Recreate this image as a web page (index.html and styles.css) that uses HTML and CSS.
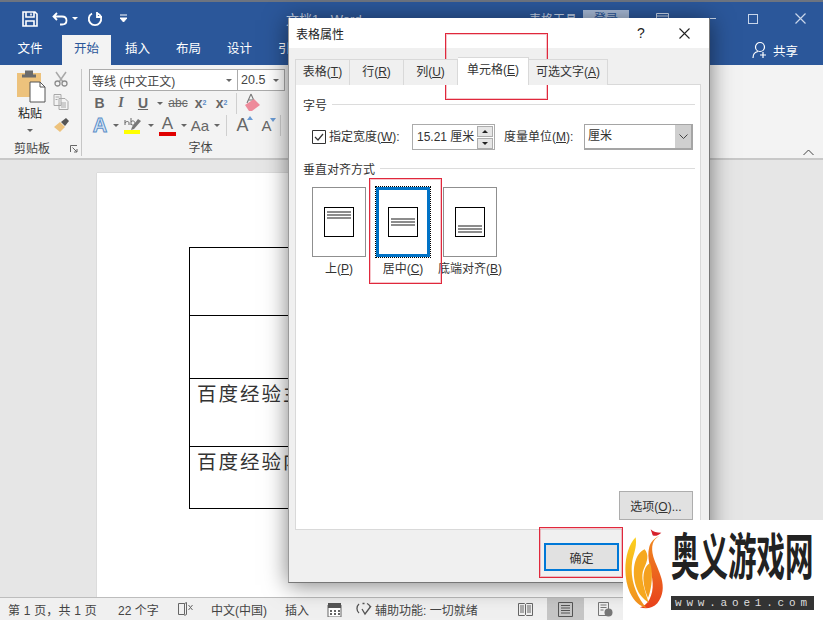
FILE: index.html
```html
<!DOCTYPE html>
<html lang="zh-CN">
<head>
    <meta charset="UTF-8">
    <title>表格属性</title>
    <link rel="stylesheet" href="styles.css">
</head>
<body>
    <div class="app">
        <div class="titlebar">
            <svg class="qat-save" width="16" height="16" viewBox="0 0 16 16"><path d="M1 1h12l2 2v12H1z M4 1v5h8V1 M4 15V10h8v5 M9 2.500v2" fill="none" stroke="#fff" stroke-width="1.600"/></svg>
            <svg class="qat-undo" width="18" height="14" viewBox="0 0 18 14"><path d="M5 1L1.500 4.500 5 8 M2 4.500h8c6 0 6 8 0 8H8" fill="none" stroke="#fff" stroke-width="1.800"/></svg>
            <span class="qat-caret"></span>
            <svg class="qat-redo" width="16" height="16" viewBox="0 0 16 16"><path d="M11 2.500A6.200 6.200 0 1 1 5 2.500 M10 1v5h5" fill="none" stroke="#fff" stroke-width="1.800"/></svg>
            <svg class="qat-more" width="7" height="9" viewBox="0 0 7 9"><path d="M0 1h7M0 4h7l-3.500 4z" stroke="#fff" fill="#fff"/></svg>
            <span class="doc-title">文档1 - Word</span>
            <span class="tool-title">表格工具</span>
            <span class="login">登录</span>
            <svg class="win-ribbon" width="13" height="12" viewBox="0 0 13 12"><path d="M.5.500h12v11H.500z M.5 3h12 M6.500 9V5M4.500 7l2-2 2 2" fill="none" stroke="#c9d6ea"/></svg>
            <span class="win-min"></span>
            <span class="win-max"></span>
            <svg class="win-close" width="11" height="11" viewBox="0 0 11 11"><path d="M.5.500l10 10M10.500.500l-10 10" stroke="#c9d6ea" stroke-width="1.200"/></svg>
        </div>

        <div class="tabs">
            <span class="tab first">文件</span>
            <span class="tab active">开始</span>
            <span class="tab">插入</span>
            <span class="tab">布局</span>
            <span class="tab">设计</span>
            <span class="tab">引用</span>
            <span class="share">
                <svg width="16" height="18" viewBox="0 0 16 18"><circle cx="8" cy="6" r="4.500" fill="none" stroke="#fff" stroke-width="1.200"/><path d="M1 17c0-4 2-6 5-6.500 M11 11v6M8 14h6" fill="none" stroke="#fff" stroke-width="1.200"/></svg>
                共享
            </span>
        </div>

        <div class="ribbon">
            <div class="group paste-group">
                <div class="group-body paste-body">
                    <div class="paste-col">
                        <svg width="30" height="34" viewBox="0 0 30 34"><path d="M1 4h24v24H1z" fill="#edc27c"/><path d="M9 1.500h8v4h3v3H6v-3h3z" fill="#6b6b6b"/><path d="M14 13h10l5 5v15H14z" fill="#fff" stroke="#555"/><path d="M24 13v5h5" fill="none" stroke="#555"/></svg>
                        <span class="paste-label">粘贴</span>
                        <span class="caret"></span>
                    </div>
                    <div class="clip-col">
                        <svg width="16" height="16" viewBox="0 0 16 16"><path d="M3 1l7 10M13 1L6 11" stroke="#a9a9a9" stroke-width="1.500"/><circle cx="4.500" cy="12.500" r="2.500" fill="none" stroke="#8d8d8d" stroke-width="1.300"/><circle cx="11.500" cy="12.500" r="2.500" fill="none" stroke="#8d8d8d" stroke-width="1.300"/></svg>
                        <svg width="16" height="16" viewBox="0 0 16 16"><path d="M1 .500h7v11H1z M6 4.500h6l3 3v8H6z M2.500 3h4M2.500 5.500h2M8 9h5M8 11h5M8 13h5" fill="#f3f3f3" stroke="#a8a8a8"/></svg>
                        <svg width="17" height="16" viewBox="0 0 17 16"><path d="M1 10l6-5 5 5-5 5z" fill="#edc27c"/><path d="M8 5l5-4 3 3-4 5z" fill="#555"/></svg>
                    </div>
                </div>
                <div class="group-label clip-label">
                    <span>剪贴板</span>
                    <svg class="launcher" width="8" height="8" viewBox="0 0 8 8"><path d="M.5 7V.500H7 M2.500 2.500L7 7M7 4v3H4" fill="none" stroke="#666"/></svg>
                </div>
            </div>

            <div class="group font-group">
                <div class="combo-row">
                    <div class="rb-combo font-name"><span>等线 (中文正文)</span><span class="caret"></span></div>
                    <div class="rb-combo font-size"><span>20.5</span><span class="caret"></span></div>
                </div>
                <div class="tool-row">
                    <span class="rb w21 bold">B</span>
                    <span class="rb w22 ital">I</span>
                    <span class="rb w22 under">U</span>
                    <span class="rb w12"><span class="caret"></span></span>
                    <span class="rb w24 strike">abc</span>
                    <span class="rb w21 bold">x<sub class="sub-mark">2</sub></span>
                    <span class="rb w21 bold">x<sup class="sup-mark">2</sup></span>
                    <span class="rb-sep first-sep"></span>
                    <span class="rb w30">
                        <svg width="20" height="20" viewBox="0 0 20 20"><path d="M9 1L5 10M9 1l4 9M6 7h6" fill="none" stroke="#777" stroke-width="1.100"/><path d="M3 12l9-6 6 6-8 6H7z" fill="#ee8b9b"/></svg>
                    </span>
                </div>
                <div class="tool-row third">
                    <span class="rb w22 text-effect">A</span>
                    <span class="rb w9"><span class="caret"></span></span>
                    <span class="rb w26">
                        <svg width="18" height="18" viewBox="0 0 18 18"><path d="M1 3v5M1 6c1-2 4-2 4 0v2M7 1v7M7 5c1-2 4-1 4 1s-3 3-4 1" fill="none" stroke="#666"/><path d="M14 2l3 2-7 8-3 1 1-3z" fill="#777"/><path d="M0 13h16v4H0z" fill="#ffff00"/></svg>
                    </span>
                    <span class="rb w9"><span class="caret"></span></span>
                    <span class="rb w25 font-color">A</span>
                    <span class="rb w8"><span class="caret"></span></span>
                    <span class="rb w24 case">Aa</span>
                    <span class="rb w10"><span class="caret"></span></span>
                    <span class="rb-sep second-sep"></span>
                    <span class="rb w25 grow">A<i class="tri-up"></i></span>
                    <span class="rb w23 shrink">A<i class="tri-down"></i></span>
                    <span class="rb-sep third-sep"></span>
                </div>
                <div class="group-label font-label">字体</div>
            </div>

            <svg class="collapse" width="11" height="7" viewBox="0 0 11 7"><path d="M.5 6L5.500 1l5 5" fill="none" stroke="#444"/></svg>
        </div>

        <div class="workspace">
            <div class="page">
                <table class="doc-table">
                    <tr class="row-a"><td></td></tr>
                    <tr class="row-b"><td></td></tr>
                    <tr class="row-c"><td>百度经验主题</td></tr>
                    <tr class="row-d"><td>百度经验内容</td></tr>
                </table>
            </div>
        </div>

        <div class="statusbar">
            <span class="st page-count">第 1 页，共 1 页</span>
            <span class="st word-count">22 个字</span>
            <svg class="st-proof" width="15" height="15" viewBox="0 0 15 15"><path d="M.5 1.500h6v11h-6z M6.500 1.500l2-1v12l-2 1 M10.500 3l4 5M14.500 3l-4 5" fill="none" stroke="#666"/></svg>
            <span class="st lang">中文(中国)</span>
            <span class="st insert">插入</span>
            <svg class="st-macro" width="15" height="15" viewBox="0 0 15 15"><path d="M1 3h13v12H1z" fill="#fff" stroke="#666"/><path d="M1 1h13v5H1z" fill="#555"/><path d="M3 8h2v2H3zM7 8h2v2H7zM11 8h2v2h-2zM3 11h2v2H3zM7 11h2v2H7zM11 11h2v2h-2z" fill="#666"/></svg>
            <svg class="st-access" width="17" height="16" viewBox="0 0 17 16"><path d="M3 12A6 6 0 0 1 3 3 M11 2.500a6 6 0 0 1 3 3 M6.500 2.500h2 M6 8l3 5 6-8" fill="none" stroke="#555" stroke-width="1.300"/></svg>
            <span class="st access-text">辅助功能: 一切就绪</span>
            <svg class="st-read" width="15" height="13" viewBox="0 0 15 13"><path d="M.5.500h6l1 1 1-1h6v12h-6l-1-1-1 1h-6z M7.500 1.500v10 M2 3h4M2 5h4M2 7h4M2 9h4M9 3h4M9 5h4M9 7h4M9 9h4" fill="none" stroke="#666"/></svg>
            <span class="st-print">
                <svg width="15" height="15" viewBox="0 0 15 15"><path d="M.5.500h14v14H.500z M3 3.500h9M3 6h9M3 8.500h9M3 11h9" fill="none" stroke="#555"/></svg>
            </span>
            <svg class="st-web" width="15" height="15" viewBox="0 0 15 15"><path d="M.5.500h10v13H.500z M2.500 3h6M2.500 5.500h6M2.500 8h3" fill="none" stroke="#777"/><circle cx="10.500" cy="10.500" r="4" fill="#777"/></svg>
        </div>

        <div class="dialog">
            <div class="dlg-title">
                <span>表格属性</span>
                <span class="dlg-help">?</span>
                <svg width="11" height="11" viewBox="0 0 11 11"><path d="M.5.500l10 10M10.500.500l-10 10" stroke="#222" stroke-width="1.100"/></svg>
            </div>
            <div class="dlg-body">
                <div class="dlg-tabs">
                    <span class="dlg-tab tab-table">表格(<u>T</u>)</span>
                    <span class="dlg-tab tab-row">行(<u>R</u>)</span>
                    <span class="dlg-tab tab-col">列(<u>U</u>)</span>
                    <span class="dlg-tab tab-cell">单元格(<u>E</u>)</span>
                    <span class="dlg-tab tab-alt">可选文字(<u>A</u>)</span>
                </div>
                <div class="panel">
                    <div class="section-head"><span>字号</span><i></i></div>
                    <div class="size-row">
                        <svg class="check" width="14" height="14" viewBox="0 0 14 14"><path d="M.5.500h13v13H.500z" fill="#fff" stroke="#333"/><path d="M3 7l3 3 5-6" fill="none" stroke="#333" stroke-width="1.200"/></svg>
                        <span class="width-label">指定宽度(<u>W</u>):</span>
                        <div class="spin-input">
                            <span class="spin-value">15.21 厘米</span>
                            <div class="spin">
                                <span class="spin-btn"><i class="tri-black-up"></i></span>
                                <span class="spin-btn"><i class="tri-black-down"></i></span>
                            </div>
                        </div>
                        <span class="unit-label">度量单位(<u>M</u>):</span>
                        <div class="dlg-combo">
                            <span class="combo-value">厘米</span>
                            <span class="combo-btn">
                                <svg width="9" height="5" viewBox="0 0 9 5"><path d="M.5.500l4 4 4-4" fill="none" stroke="#444"/></svg>
                            </span>
                        </div>
                    </div>
                    <div class="section-head second"><span>垂直对齐方式</span><i></i></div>
                    <div class="align-row">
                        <div class="align-opt">
                            <div class="align-btn">
                                <div class="cell-mark top"><i></i><i></i><i></i></div>
                            </div>
                            <span>上(<u>P</u>)</span>
                        </div>
                        <div class="align-opt opt-center">
                            <div class="align-btn selected">
                                <div class="cell-mark center"><i></i><i></i><i></i></div>
                            </div>
                            <span>居中(<u>C</u>)</span>
                        </div>
                        <div class="align-opt opt-bottom">
                            <div class="align-btn">
                                <div class="cell-mark bottom"><i></i><i></i><i></i></div>
                            </div>
                            <span>底端对齐(<u>B</u>)</span>
                        </div>
                    </div>
                    <button class="btn options">选项(<u>O</u>)...</button>
                </div>
                <div class="dlg-foot">
                    <button class="btn ok">确定</button>
                </div>
            </div>
        </div>

        <div class="mark mark-tab"></div>
        <div class="mark mark-center"></div>
        <div class="mark mark-ok"></div>

        <div class="watermark">
            <svg class="flame" width="47" height="100" viewBox="9 0 141 300">
                <defs>
                    <linearGradient id="fl-a" x1="0" y1="0" x2="0" y2="1"><stop offset="0" stop-color="#f08a20"/><stop offset="1" stop-color="#e8401c"/></linearGradient>
                    <linearGradient id="fl-b" x1="0" y1="0" x2="0" y2="1"><stop offset="0" stop-color="#fbd020"/><stop offset="1" stop-color="#f08c1e"/></linearGradient>
                </defs>
                <path d="M92 28C100 36 110 38 124 38 116 46 105 50 98 46Z" fill="#d6202a"/>
                <path d="M118 48C98 58 92 80 100 110 112 150 150 200 112 250 98 266 76 268 60 262 84 258 100 225 98 190 96 150 78 115 88 80 92 66 104 54 118 48Z" fill="url(#fl-a)"/>
                <path d="M47 52C14 85 6 165 30 218 42 244 60 258 80 264 50 232 30 180 36 130 38 105 52 85 47 52Z" fill="url(#fl-b)"/>
                <path d="M74 88C44 100 32 155 50 205 56 222 70 238 86 248 72 205 60 170 72 145 82 125 88 105 74 88Z" fill="#f6a81f"/>
                <path d="M90 130C68 140 62 185 84 234 96 205 100 155 90 130Z" fill="#f4a01e"/>
            </svg>
            <div class="wm-side">
                <div class="wm-name"><span>奥义游戏网</span></div>
                <div class="wm-url">www.aoe1.com</div>
            </div>
        </div>
    </div>
</body>
</html>
```

FILE: styles.css
```css
* {
    box-sizing: border-box;
}

body {
    margin: 0;
    background-color: #FFFFFF;
    font-family: "Liberation Sans", "Noto Sans CJK SC", sans-serif;
    font-size: 12px;
    color: #333;
}

.app {
    position: relative;
    width: 823px;
    height: 620px;
    display: flex;
    flex-direction: column;
    overflow: hidden;
}

i {
    display: block;
}

/* title bar */
.titlebar {
    height: 35px;
    flex: none;
    display: flex;
    align-items: center;
    background-color: #2B579A;
    border-top: 2px solid #6d7480;
    color: #fff;
}

.qat-save {
    margin-left: 22px;
}

.qat-undo {
    margin-left: 14px;
}

.qat-caret {
    margin-left: 2px;
    border-top: 3px solid #fff;
    border-left: 3px solid transparent;
    border-right: 3px solid transparent;
}

.qat-redo {
    margin-left: 9px;
}

.qat-more {
    margin-left: 17px;
}

.doc-title {
    margin-left: 159px;
    width: 243px;
    font-size: 13px;
    color: #c9d6ea;
}

.tool-title {
    width: 54px;
    color: #c9d6ea;
}

.login {
    width: 46px;
    height: 18px;
    line-height: 18px;
    background-color: #a9bcd8;
    color: #2B579A;
    text-align: center;
}

.win-ribbon {
    margin-left: 27px;
}

.win-min {
    margin-left: 37px;
    width: 10px;
    border-top: 1px solid #c9d6ea;
}

.win-max {
    margin-left: 32px;
    width: 10px;
    height: 10px;
    border: 1px solid #c9d6ea;
}

.win-close {
    margin-left: 37px;
}

/* tab row */
.tabs {
    height: 30px;
    flex: none;
    display: flex;
    background-color: #2B579A;
    color: #fff;
    font-size: 12.500px;
}

.tab {
    width: 51px;
    line-height: 29px;
    text-align: center;
}

.tab.first {
    width: 50px;
    margin-left: 5px;
    margin-right: 7px;
}

.tab.active {
    width: 49px;
    margin-right: 1px;
    background-color: #f3f3f3;
    color: #2B579A;
}

.share {
    margin-left: auto;
    margin-right: 25px;
    display: flex;
    align-items: center;
    gap: 5px;
    font-size: 12.500px;
}

/* ribbon */
.ribbon {
    height: 95px;
    flex: none;
    display: flex;
    background-color: #f3f3f3;
    border-bottom: 2px solid #c8c8c8;
}

.group {
    height: 93px;
}

.paste-group {
    width: 82px;
    display: flex;
    flex-direction: column;
    border-right: 1px solid #c6c6c6;
    margin: 4px 0 2px;
    height: 87px;
}

.paste-body {
    display: flex;
    height: 70px;
}

.paste-col {
    width: 53px;
    padding-left: 16px;
    display: flex;
    flex-direction: column;
    align-items: flex-start;
}

.paste-label {
    margin: 2px 0 0 2px;
    font-size: 12px;
    line-height: 18px;
    color: #222;
}

.paste-col .caret {
    margin: 6px 0 0 11px;
}

.clip-col {
    display: flex;
    flex-direction: column;
    gap: 7px;
    padding-top: 2px;
}

.clip-label {
    display: flex;
    align-items: center;
    padding-left: 14px;
    color: #444;
}

.launcher {
    margin-left: 20px;
    margin-top: 3px;
}

.font-group {
    width: 203px;
    padding: 4px 0 0 7px;
}

.caret {
    display: inline-block;
    border-top: 3px solid #666;
    border-left: 3px solid transparent;
    border-right: 3px solid transparent;
}

.combo-row {
    display: flex;
    width: 196px;
}

.rb-combo {
    height: 22px;
    display: flex;
    align-items: center;
    justify-content: space-between;
    padding: 0 5px 0 2px;
    border: 1px solid #ababab;
    background-color: #fff;
    font-size: 12px;
    color: #444;
}

.font-name {
    width: 149px;
}

.font-size {
    width: 47px;
    border-left: none;
    padding-left: 3px;
    font-size: 12.500px;
}

.tool-row {
    height: 22px;
    margin-top: 1px;
    display: flex;
    align-items: center;
    width: 196px;
}

.tool-row.third {
    height: 23px;
    margin-top: 0;
}

.rb {
    display: flex;
    justify-content: center;
    align-items: center;
    font-size: 13px;
    color: #666;
    position: relative;
}

.w8 { width: 8px; }
.w9 { width: 9px; }
.w10 { width: 10px; }
.w12 { width: 12px; }
.w21 { width: 21px; }
.w22 { width: 22px; }
.w23 { width: 23px; }
.w24 { width: 24px; }
.w25 { width: 25px; }
.w26 { width: 26px; }
.w30 { width: 30px; }

.bold {
    font-weight: bold;
    font-size: 14px;
}

.ital {
    font-style: italic;
    font-family: "Liberation Serif", serif;
    font-weight: bold;
    font-size: 14px;
}

.under {
    font-weight: bold;
    text-decoration: underline;
    font-size: 14px;
}

.strike {
    text-decoration: line-through;
    font-size: 12px;
}

.sub-mark,
.sup-mark {
    font-size: 7px;
    color: #5b8cc8;
    line-height: 0;
}

.rb-sep {
    width: 1px;
    height: 21px;
    background-color: #cfcfcf;
}

.first-sep {
    margin-left: 4px;
}

.second-sep {
    margin-left: 4px;
    margin-right: 3px;
}

.third-sep {
    margin-left: 2px;
}

.text-effect {
    font-size: 20px;
    font-weight: bold;
    color: #dce9f6;
    -webkit-text-stroke: 1px #5b8fc9;
}

.font-color {
    font-size: 17px;
    line-height: 16px;
    height: 20px;
    color: #666;
    border-bottom: 4px solid #e00000;
    width: 17px;
    margin: 0 4px;
}

.case {
    font-size: 15px;
}

.grow,
.shrink {
    font-size: 18px;
}

.shrink {
    font-size: 15px;
}

.tri-up,
.tri-down {
    position: absolute;
    top: 1px;
    right: 2px;
    border-left: 3px solid transparent;
    border-right: 3px solid transparent;
}

.tri-up {
    border-bottom: 4px solid #6a9bd4;
}

.tri-down {
    border-top: 4px solid #6a9bd4;
}

.font-label {
    margin-top: 1px;
    width: 223px;
    text-align: center;
    color: #444;
    white-space: nowrap;
}

.collapse {
    margin: 84px 9px 0 auto;
}

/* document */
.workspace {
    flex: 1;
    min-height: 0;
    overflow: hidden;
    padding: 13px 0 0 97px;
    background-color: #e6e6e6;
}

.page {
    width: 600px;
    height: 500px;
    padding: 74px 0 0 92px;
    background-color: #fff;
    box-shadow: 0 0 1px #aaa;
}

.doc-table {
    width: 480px;
    border-collapse: collapse;
    font-size: 19.500px;
    letter-spacing: 2px;
    color: #333;
}

.doc-table td {
    padding: 0 7px;
    vertical-align: top;
    border: 1px solid #000;
    line-height: 30px;
}

.row-a {
    height: 68px;
}

.row-b {
    height: 63px;
}

.row-c {
    height: 68px;
}

.row-d {
    height: 62px;
}

/* status bar */
.statusbar {
    height: 23px;
    flex: none;
    display: flex;
    align-items: center;
    background-color: #f0f0f0;
    border-top: 1px solid #bdbdbd;
    color: #444;
}

.page-count {
    margin-left: 8px;
    width: 110px;
    letter-spacing: 0.200px;
}

.word-count {
    width: 60px;
}

.st-proof {
    margin-right: 18px;
}

.lang {
    width: 74px;
}

.insert {
    width: 42px;
}

.st-macro {
    margin-right: 14px;
}

.access-text {
    margin-left: 2px;
    width: 143px;
}

.st-print {
    margin-left: 14px;
    width: 37px;
    height: 22px;
    display: flex;
    align-items: center;
    justify-content: center;
    background-color: #c6c6c6;
}

.st-web {
    margin-left: 14px;
}

/* dialog */
.dialog {
    position: absolute;
    left: 288px;
    top: 18px;
    width: 422px;
    height: 565px;
    display: flex;
    flex-direction: column;
    background-color: #f0f0f0;
    border-right: 1px solid #777;
    border-bottom: 1px solid #777;
    border-left: 1px solid #999;
    box-shadow: 0 2px 22px rgba(0, 0, 0, 0.5);
}

.dlg-title {
    height: 30px;
    flex: none;
    display: flex;
    align-items: center;
    padding-left: 7px;
    background-color: #fff;
    color: #222;
}

.dlg-help {
    margin-left: 293px;
    margin-right: 34px;
    font-size: 14px;
}

.dlg-body {
    flex: 1;
    padding-top: 9px;
}

.dlg-tabs {
    height: 28px;
    margin-left: 6px;
    display: flex;
    align-items: flex-end;
    position: relative;
    z-index: 1;
}

.dlg-tab {
    height: 26px;
    line-height: 24px;
    text-align: center;
    background-color: #f0f0f0;
    border: 1px solid #d9d9d9;
    border-left: none;
    border-bottom: none;
    color: #333;
}

.tab-table {
    width: 55px;
    border-left: 1px solid #d9d9d9;
}

.tab-row {
    width: 54px;
}

.tab-col {
    width: 54px;
}

.tab-cell {
    width: 71px;
    height: 28px;
    background-color: #fff;
}

.tab-alt {
    width: 79px;
}

.panel {
    width: 406px;
    height: 446px;
    margin: -1px 0 0 6px;
    padding: 11px 5px 0 7px;
    display: flex;
    flex-direction: column;
    background-color: #fff;
    border: 1px solid #d9d9d9;
}

.section-head {
    height: 16px;
    display: flex;
    align-items: center;
    gap: 5px;
    color: #333;
}

.section-head i {
    flex: 1;
    border-top: 1px solid #dcdcdc;
}

.section-head.second {
    margin-top: 10px;
}

.size-row {
    height: 26px;
    margin: 12px 2px 0 9px;
    display: flex;
    align-items: center;
}

.check {
    flex: none;
}

.width-label {
    width: 83px;
    margin-left: 3px;
    padding-bottom: 3px;
}

.spin-input {
    width: 83px;
    height: 26px;
    display: flex;
    align-items: center;
    justify-content: space-between;
    padding: 0 1px 0 4px;
    border: 1px solid #ababab;
}

.spin-value {
    padding-bottom: 3px;
}

.spin {
    width: 16px;
    display: flex;
    flex-direction: column;
    gap: 1px;
}

.spin-btn {
    height: 11px;
    display: flex;
    align-items: center;
    justify-content: center;
    background-color: #e6e6e6;
    border: 1px solid #adadad;
}

.tri-black-up,
.tri-black-down {
    border-left: 3px solid transparent;
    border-right: 3px solid transparent;
}

.tri-black-up {
    border-bottom: 3px solid #222;
}

.tri-black-down {
    border-top: 3px solid #222;
}

.unit-label {
    width: 80px;
    margin-left: 9px;
    padding-bottom: 3px;
}

.dlg-combo {
    width: 109px;
    height: 26px;
    display: flex;
    border: 1px solid #a5a5a5;
    border-right-width: 2px;
    border-bottom-width: 2px;
}

.combo-value {
    flex: 1;
    padding-left: 3px;
    line-height: 22px;
}

.combo-btn {
    width: 16px;
    display: flex;
    align-items: center;
    justify-content: center;
    background-color: #cfcfcf;
}

.align-row {
    margin: 11px 0 0 9px;
    display: flex;
}

.align-opt {
    width: 54px;
    display: flex;
    flex-direction: column;
    align-items: center;
    white-space: nowrap;
    color: #333;
}

.align-opt span {
    margin-top: 4px;
    line-height: 16px;
}

.opt-center {
    margin-left: 10px;
}

.opt-bottom {
    margin-left: 13px;
}

.align-btn {
    width: 54px;
    height: 70px;
    display: flex;
    align-items: center;
    justify-content: center;
    border: 1px solid #8f8f8f;
    background-color: #fff;
}

.align-btn.selected {
    border: 3px solid #0072c6;
    outline: 1px dotted #000;
    outline-offset: 0;
}

.cell-mark {
    width: 30px;
    height: 30px;
    padding: 3px 2px;
    display: flex;
    flex-direction: column;
    gap: 1px;
    border: 1px solid #000;
}

.cell-mark i {
    height: 2px;
    background-color: #8c8c8c;
}

.cell-mark.center {
    justify-content: center;
}

.cell-mark.bottom {
    justify-content: flex-end;
}

.btn {
    font: inherit;
    color: #333;
    background-color: #e1e1e1;
    border: 1px solid #adadad;
    padding: 0;
}

.options {
    width: 74px;
    height: 29px;
    margin: auto 2px 9px auto;
}

.dlg-foot {
    padding: 13px 0 0 255px;
}

.ok {
    width: 75px;
    height: 28px;
    border: 2px solid #0078d7;
}

/* red boxes drawn over the screenshot */
.mark {
    position: absolute;
    border: 1px solid #e0283c;
    box-shadow: inset 0 0 0 1px rgba(224, 60, 80, 0.3);
}

.mark-tab {
    left: 445px;
    top: 33px;
    width: 103px;
    height: 67px;
}

.mark-center {
    left: 369px;
    top: 178px;
    width: 73px;
    height: 106px;
}

.mark-ok {
    left: 539px;
    top: 527px;
    width: 84px;
    height: 51px;
}

/* watermark */
.watermark {
    position: absolute;
    left: 623px;
    top: 520px;
    width: 200px;
    height: 100px;
    display: flex;
    background-color: #fff;
}

.wm-side {
    margin-left: 1px;
    width: 143px;
}

.wm-name {
    height: 76px;
    display: flex;
    align-items: center;
    font-family: "Noto Sans CJK SC", sans-serif;
    font-size: 28.500px;
    font-weight: 700;
    color: #222;
    white-space: nowrap;
}

.wm-name span {
    display: block;
    line-height: 30px;
    transform: scaleY(1.75);
    margin-top: -9px;
}

.wm-url {
    height: 14px;
    line-height: 14px;
    padding-left: 4px;
    background-color: #333;
    color: #ddd;
    font-family: "Liberation Mono", monospace;
    font-size: 11px;
    letter-spacing: 4.800px;
    white-space: nowrap;
}
```
